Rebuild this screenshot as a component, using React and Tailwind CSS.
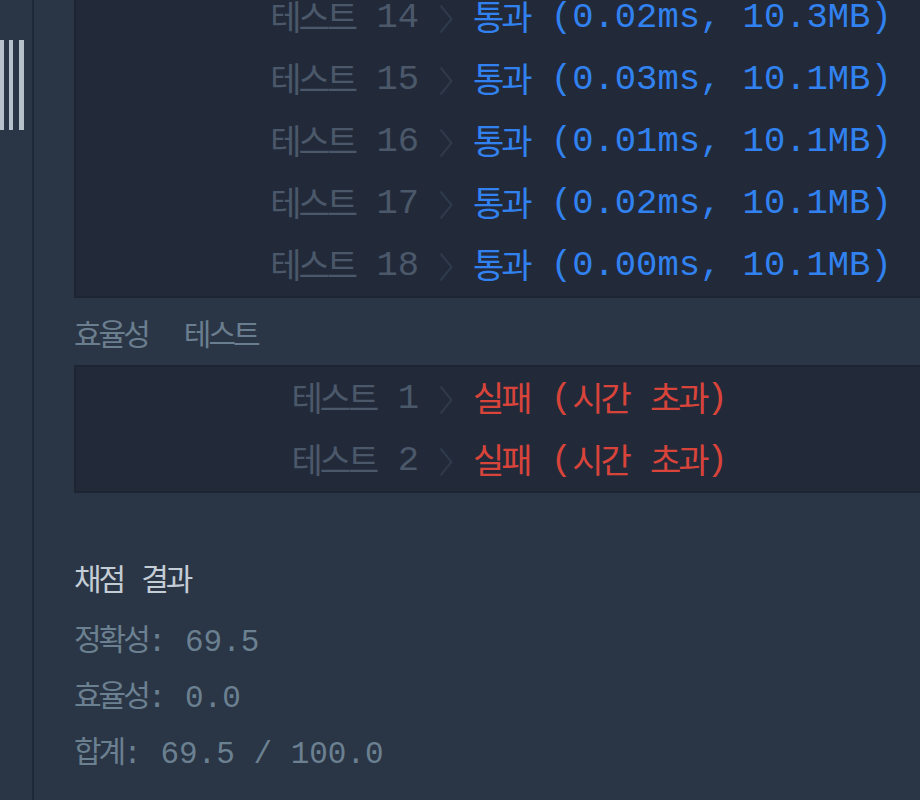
import React from "react";

const MONO = "font-['Liberation_Mono','Noto_Sans_CJK_KR',monospace]";
const KR_ROW = "text-[34px] tracking-[-3px] align-[-3px]";
const KR_SM = "text-[30px] tracking-[-3px]";

function Chevron() {
  return (
    <svg width="14" height="30" viewBox="0 0 14 30" className="block">
      <polyline points="1.5,1.5 12.5,15 1.5,28.5" fill="none" stroke="#2f3a4b" strokeWidth="2" />
    </svg>
  );
}

function Row({ n, status, detail, fail }) {
  return (
    <div className={`grid grid-cols-[343px_54px_1fr] h-[62px] pt-[3px] items-center ${MONO} text-[35.5px] leading-none`}>
      <div className="text-right text-[#4b586a] whitespace-pre">
        <span className={KR_ROW}>테스트</span>
        {" " + n}
      </div>
      <div className="flex justify-center">
        <Chevron />
      </div>
      <div className={`whitespace-pre ${fail ? "text-[#d8443a]" : "text-[#3182f0]"}`}>
        <span className={KR_ROW}>{status}</span>
        {" ("}
        {detail}
        {")"}
      </div>
    </div>
  );
}

function FailDetail() {
  return (
    <>
      <span className={KR_ROW}>시간</span>
      {" "}
      <span className={KR_ROW}>초과</span>
    </>
  );
}

function ScoreLine({ label, value }) {
  return (
    <div className={`h-[56px] flex items-center ${MONO} text-[31px] leading-none text-[#6b8090] whitespace-pre`}>
      <span className={`${KR_SM} align-[-2px]`}>{label}</span>
      {": " + value}
    </div>
  );
}

export default function App() {
  const accuracy = [
    ["14", "0.02ms, 10.3MB"],
    ["15", "0.03ms, 10.1MB"],
    ["16", "0.01ms, 10.1MB"],
    ["17", "0.02ms, 10.1MB"],
    ["18", "0.00ms, 10.1MB"],
  ];
  return (
    <div className="w-[920px] h-[800px] overflow-hidden bg-[#2a3646] flex">
      <div className="w-[32px] shrink-0 pt-[40px]">
        <div className="flex h-[90px]">
          <div className="w-[4px] bg-[#b7c1ca]" />
          <div className="w-[4px] ml-[5px] bg-[#b7c1ca]" />
          <div className="w-[5px] ml-[6px] bg-[#b7c1ca]" />
        </div>
      </div>
      <div className="w-[2px] shrink-0 bg-[#1f2837]" />
      <div className="flex-1 min-w-0 pl-[40px]">
        <div className="w-[900px] mt-[-16px] border-2 border-[#1e2532] bg-[#222a3a]">
          {accuracy.map(([n, d]) => (
            <Row key={n} n={n} status="통과" detail={d} />
          ))}
        </div>
        <div className={`h-[67px] flex items-center font-['Noto_Sans_CJK_KR',sans-serif] ${KR_SM} leading-none text-[#6a7e8f]`}>
          <span>효율성</span>
          <span className="ml-[36px]">테스트</span>
        </div>
        <div className="w-[900px] border-2 border-[#1e2532] bg-[#222a3a]">
          <Row n="1" status="실패" detail={<FailDetail />} fail />
          <Row n="2" status="실패" detail={<FailDetail />} fail />
        </div>
        <div className={`mt-[64px] h-[40px] flex items-center font-['Noto_Sans_CJK_KR',sans-serif] ${KR_SM} leading-none text-[#c4ccd5]`}>
          <span>채점</span>
          <span className="ml-[18px]">결과</span>
        </div>
        <div className="mt-[17px]">
          <ScoreLine label="정확성" value="69.5" />
          <ScoreLine label="효율성" value="0.0" />
          <ScoreLine label="합계" value="69.5 / 100.0" />
        </div>
      </div>
    </div>
  );
}
